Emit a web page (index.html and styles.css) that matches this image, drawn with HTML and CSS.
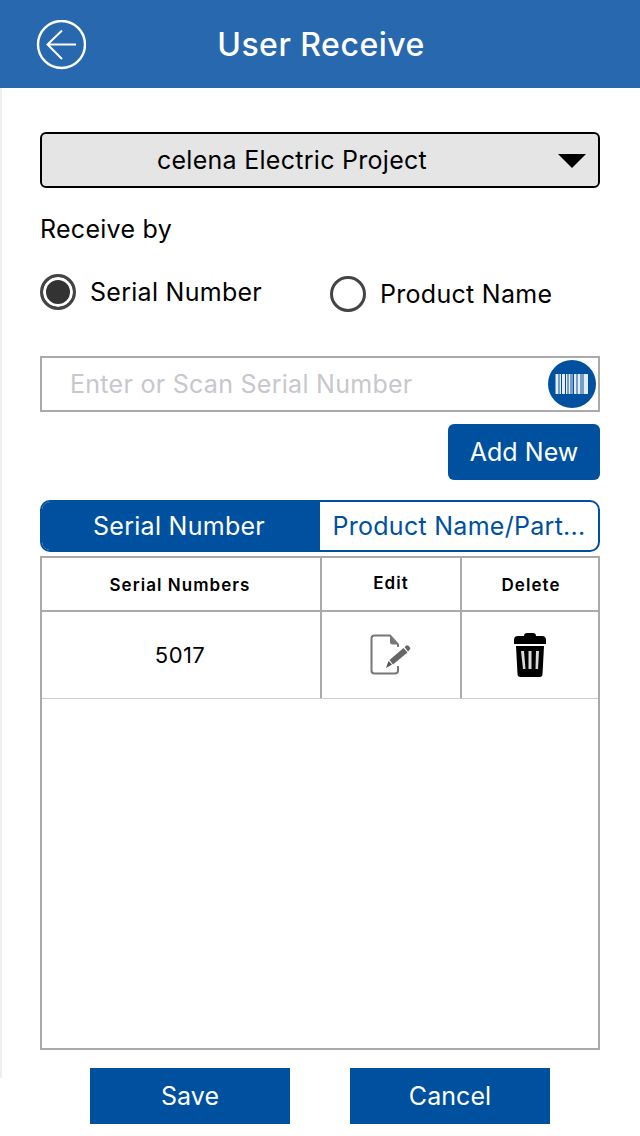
FILE: index.html
```html
<!DOCTYPE html>
<html lang="en">
<head>
<meta charset="utf-8">
<title>User Receive</title>
<link rel="stylesheet" href="styles.css">
</head>
<body>
<header class="topbar">
  <svg class="back" viewBox="0 0 50 50" width="50" height="50" aria-hidden="true">
    <circle cx="25.500" cy="24.500" r="23.500" fill="none" stroke="#fff" stroke-width="2.400"/>
    <path d="M40 24.500H11.500M26 10.500 11.500 24.500 26 39" fill="none" stroke="#fff" stroke-width="2"/>
  </svg>
  <h1 class="title">User Receive</h1>
</header>
<div class="edge"></div>
<main class="content">
  <div class="select">
    <span class="select-text">celena Electric Project</span>
    <span class="caret"></span>
  </div>
  <div class="label">Receive by</div>
  <div class="radios">
    <div class="radio-item">
      <span class="radio on"></span><span class="radio-text">Serial Number</span>
    </div>
    <div class="radio-item second">
      <span class="radio"></span><span class="radio-text">Product Name</span>
    </div>
  </div>
  <div class="input">
    <span class="placeholder">Enter or Scan Serial Number</span>
    <svg class="scan" viewBox="0 0 48 48" width="48" height="48" aria-hidden="true">
      <circle cx="24" cy="24" r="24" fill="#0050a0"/>
      <path d="M7.500 14h3v20h-3zM11.500 14h1.500v20h-1.500zM14 14h3v20h-3zM18 14h1.500v20H18zM20.500 14h2v20h-2zM23.500 14h1v20h-1zM26 14h2.500v20H26zM29.500 14h3v20h-3zM33.500 14h1v20h-1zM35.500 14h4.500v20h-4.500z" fill="#e4edf6"/>
    </svg>
  </div>
  <div class="add-row"><button class="btn add">Add New</button></div>
  <div class="tabs">
    <div class="tab active"><span class="tab-label">Serial Number</span></div>
    <div class="tab">Product Name/Part...</div>
  </div>
  <div class="table">
    <div class="row head">
      <div class="cell c1">Serial Numbers</div>
      <div class="cell c2"><span class="edit-head">Edit</span></div>
      <div class="cell c3">Delete</div>
    </div>
    <div class="row body">
      <div class="cell c1">5017</div>
      <div class="cell c2">
        <svg class="edit-icon" viewBox="0 0 42 42" width="42" height="42" aria-hidden="true">
          <path d="M28 13V10.500L20 1.500H4.500Q1.500 1.500 1.500 4.500V36.500q0 3 3 3h20.500q3 0 3-3V32" fill="none" stroke="#777" stroke-width="2"/>
          <path d="M20 2v6q0 2.500 2.500 2.500H27z" fill="#777"/>
          <path d="M16 34l2.500-7 3.500 3.500z" fill="#555"/>
          <path d="M19.500 26 33.500 14l4 4.500L23 30.500z" fill="#666"/>
          <path d="M34.500 13l2-1.500q1-.7 2 .3l1.500 1.700q.8 1-.2 2L38 17.500z" fill="#666"/>
        </svg>
      </div>
      <div class="cell c3">
        <svg class="trash-icon" viewBox="0 0 32 44" width="32" height="44" aria-hidden="true">
          <path d="M10 3Q10 0 13 0h6q3 0 3 3h6q4 0 4 4v4H0V7q0-4 4-4z" fill="#000"/>
          <path d="M2 13h28l-1.500 28q0 3-3 3h-19q-3 0-3-3z" fill="#000"/>
          <path d="M7 18h3l1.500 18h-2.500zM14.500 18h3v18h-3zM22 18h3l-1 18h-2.500z" fill="#fff" opacity=".85"/>
        </svg>
      </div>
    </div>
  </div>
  <div class="actions">
    <button class="btn action">Save</button>
    <button class="btn action">Cancel</button>
  </div>
</main>
</body>
</html>
```
FILE: styles.css
```css
* { box-sizing: border-box; }
html, body { margin: 0; padding: 0; }
body {
  width: 640px;
  height: 1136px;
  overflow: hidden;
  background: #fff;
  color: #000;
  font-family: Inter, "Liberation Sans", sans-serif;
  letter-spacing: .28px;
  position: relative;
}
.topbar {
  height: 88px;
  background: #2868ae;
  display: flex;
  align-items: center;
  justify-content: center;
  position: relative;
}
.back { position: absolute; left: 36px; top: 20px; }
.title {
  margin: 0;
  padding: 2px 0 0 2px;
  color: #fff;
  font-size: 32px;
  font-weight: 500;
  line-height: 36px;
  letter-spacing: .5px;
}
.edge {
  position: absolute;
  left: 0;
  top: 88px;
  width: 2px;
  height: 990px;
  background: #efefef;
}
.content { padding: 44px 40px 0; }
.select {
  height: 56px;
  background: #e5e5e5;
  border: 2px solid #000;
  border-radius: 6px;
  display: flex;
  align-items: center;
  justify-content: center;
  position: relative;
  padding-right: 56px;
  font-size: 25px;
}
.caret {
  position: absolute;
  right: 12px;
  top: 20px;
  width: 0;
  height: 0;
  border-left: 14px solid transparent;
  border-right: 14px solid transparent;
  border-top: 14px solid #000;
}
.label { margin-top: 26px; font-size: 25px; line-height: 30px; }
.radios { display: flex; margin-top: 30px; height: 40px; }
.radio-item { display: flex; align-items: center; gap: 14px; width: 290px; height: 36px; }
.radio-item.second { margin-top: 2px; width: auto; }
.radio {
  width: 36px;
  height: 36px;
  border-radius: 50%;
  border: 3px solid #444;
  background: #fff;
  flex: none;
}
.radio.on {
  background: #333;
  box-shadow: inset 0 0 0 3px #fff;
}
.radio-text { font-size: 25px; line-height: 30px; }
.input {
  margin-top: 42px;
  height: 56px;
  border: 2px solid #aaa;
  display: flex;
  align-items: center;
  justify-content: space-between;
  padding-left: 28px;
  padding-right: 2px;
}
.placeholder { color: #c7c7cd; font-size: 25px; }
.add-row { display: flex; justify-content: flex-end; margin-top: 12px; }
.btn {
  border: 0;
  background: #0050a0;
  color: #fff;
  font-family: inherit;
  font-size: 25px;
  letter-spacing: .05px;
  padding: 0;
}
.add { width: 152px; height: 56px; border-radius: 6px; }
.tabs {
  margin-top: 20px;
  height: 52px;
  display: flex;
  border: 2px solid #0050a0;
  border-radius: 10px;
  overflow: hidden;
  color: #0050a0;
  font-size: 25px;
}
.tab { display: flex; align-items: center; justify-content: center; flex: 1; white-space: nowrap; }
.tab.active { flex: none; width: 278px; background: #0050a0; color: #fff; }
.tab-label { margin-right: 4px; }
.table {
  margin-top: 4px;
  height: 494px;
  border: 2px solid #aaa;
}
.row { display: flex; }
.row.head { height: 54px; border-bottom: 2px solid #aaa; font-size: 17px; font-weight: 600; letter-spacing: 1.05px; }
.row.head .cell { padding-top: 2px; }
.row.body { height: 87px; border-bottom: 1px solid #ccc; font-size: 22px; letter-spacing: .4px; }
.cell { display: flex; align-items: center; justify-content: center; }
.c1 { width: 278px; padding-right: 2px; }
.c2 { width: 140px; border-left: 2px solid #aaa; }
.c3 { width: 138px; border-left: 2px solid #aaa; }
.row.head .c3 { padding-left: 2px; }
.edit-head { margin-bottom: 4px; }
.actions { display: flex; justify-content: center; gap: 60px; margin-top: 18px; }
.action { width: 200px; height: 56px; }
```
